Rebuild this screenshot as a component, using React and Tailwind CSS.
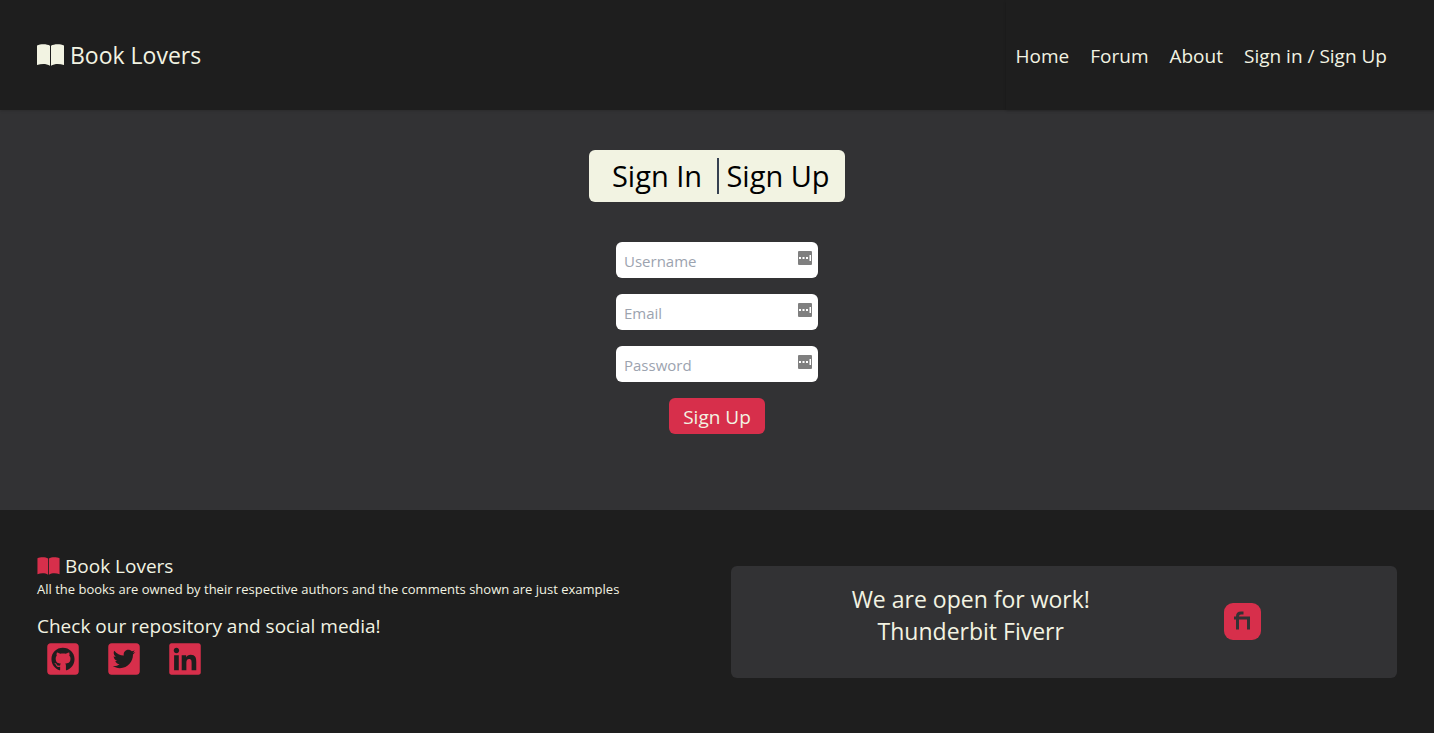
import { FaGithubSquare, FaTwitterSquare, FaLinkedin } from "react-icons/fa";

function BookIcon({ className }) {
  return (
    <svg viewBox="0 0 54 44" className={className} fill="currentColor" aria-hidden="true">
      <path d="M26 3.500C20 -0.500 7 -0.500 0 3V42C9 39 19 39 26 43.500Z" />
      <path d="M28 3.500C34 -0.500 47 -0.500 54 3V42C45 39 35 39 28 43.500Z" />
    </svg>
  );
}

function FiverrIcon({ className }) {
  return (
    <svg viewBox="0 0 37 37" className={className} role="img" aria-label="Fiverr">
      <rect width="37" height="37" rx="9" fill="#d72f4b" />
      <path
        d="M10 15H26M13.500 26.500V13.500Q13.500 10 17 10H19.500M24.500 26.500V15"
        fill="none"
        stroke="#323234"
        strokeWidth="3"
      />
    </svg>
  );
}

function FieldBadge() {
  return (
    <svg viewBox="0 0 14 14" className="pointer-events-none absolute top-[9px] right-[6px] size-[14px]" aria-hidden="true">
      <rect width="14" height="14" rx="1" fill="#7f7f7f" />
      <path d="M1 6h2v2H1zM4.500 6h2v2h-2zM8 6h2v2H8zM11.500 4h1.500v6h-1.500z" fill="#fff" />
    </svg>
  );
}

function Field({ label, type, name }) {
  return (
    <div className="relative">
      <input
        type={type}
        name={name}
        aria-label={label}
        placeholder={label}
        className="block h-9 w-[202px] rounded-md bg-white pt-[2px] pr-7 pl-2 text-[15px] text-black placeholder:text-[#9ca3af]"
      />
      <FieldBadge />
    </div>
  );
}

export default function App() {
  return (
    <div className="flex min-h-screen flex-col bg-[#1e1e1e] font-['Open_Sans',sans-serif] text-[#f2f3e2]">
      <header className="z-10 flex h-[110px] items-stretch justify-between bg-[#1e1e1e] pl-[37px] shadow-sm">
        <a href="#home" className="flex items-center gap-[6px] text-[23px]">
          <BookIcon className="h-[22px] w-[27px]" />
          Book Lovers
        </a>
        <nav className="flex items-center gap-[21px] pt-[2px] pr-[47px] pl-[10px] text-[19px] shadow-sm">
          <a href="#home">Home</a>
          <a href="#forum">Forum</a>
          <a href="#about">About</a>
          <a href="#sign">Sign in / Sign Up</a>
        </nav>
      </header>

      <main className="flex h-[400px] flex-col items-center bg-[#323234] pt-10">
        <div className="flex h-[52px] w-64 items-center rounded-md bg-[#f2f3e2] text-[29px] text-black">
          <button type="button" className="w-32 pl-2">Sign In</button>
          <span className="h-9 w-[2px] bg-[#374151]" />
          <button type="button" className="flex-1 pr-2">Sign Up</button>
        </div>
        <form className="mt-10 flex flex-col items-center gap-4" onSubmit={(e) => e.preventDefault()}>
          <Field label="Username" type="text" name="username" />
          <Field label="Email" type="email" name="email" />
          <Field label="Password" type="password" name="password" />
          <button type="submit" className="h-9 w-24 rounded-md bg-[#d72f4b] pt-[2px] text-[19px]">Sign Up</button>
        </form>
      </main>

      <footer className="grid flex-1 grid-cols-2 bg-[#1e1e1e] px-[37px]">
        <div className="pt-[42px]">
          <h2 className="flex items-center gap-[5px] text-[19px] leading-7">
            <BookIcon className="h-[18px] w-[23px] text-[#d72f4b]" />
            Book Lovers
          </h2>
          <p className="text-[13px] leading-[18px]">
            All the books are owned by their respective authors and the comments shown are just examples
          </p>
          <h3 className="mt-[14px] text-[19px] leading-7">Check our repository and social media!</h3>
          <div className="mt-px flex gap-[25px] pl-2 text-[36px] text-[#d72f4b]">
            <a href="#github" aria-label="GitHub"><FaGithubSquare /></a>
            <a href="#twitter" aria-label="Twitter"><FaTwitterSquare /></a>
            <a href="#linkedin" aria-label="LinkedIn"><FaLinkedin /></a>
          </div>
        </div>
        <div className="mt-14 ml-[14px] grid h-28 grid-cols-[18fr_7fr] rounded-md bg-[#323234] pt-[17px]">
          <p className="text-center text-[23px] leading-8">
            We are open for work!
            <br />
            Thunderbit Fiverr
          </p>
          <a href="#fiverr" className="justify-self-start pt-5 pl-[13px]"><FiverrIcon className="size-[37px]" /></a>
        </div>
      </footer>
    </div>
  );
}
